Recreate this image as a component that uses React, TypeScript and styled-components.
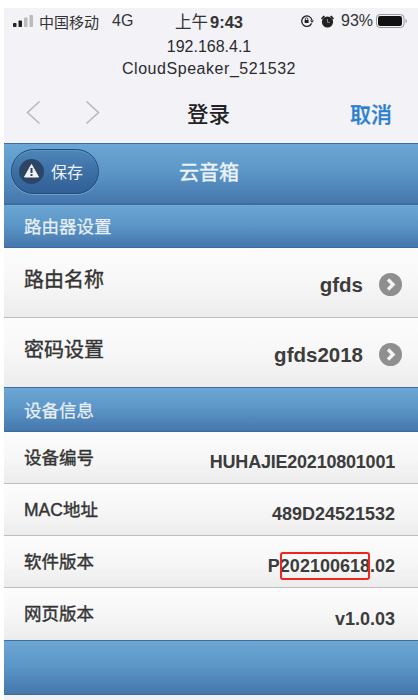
import React from 'react';
import styled, { createGlobalStyle } from 'styled-components';

const FONT = `"Liberation Sans", Arial, "Noto Sans CJK SC", sans-serif`;

const GlobalStyle = createGlobalStyle`
  html, body {
    margin: 0;
    padding: 0;
    background: #fff;
    font-family: ${FONT};
  }
  * { box-sizing: border-box; }
`;

const Page = styled.div`
  width: 418px;
  height: 700px;
  padding: 8px 0 0 4px;
  overflow: hidden;
  background: #fff;
`;

const Browser = styled.div`
  height: 135px;
  background: #f2f2f7;
  color: #2b2b2e;
`;

const StatusBar = styled.div`
  display: flex;
  align-items: center;
  height: 26px;
  padding: 0 0 0 8px;
  color: #333;
`;

const Carrier = styled.span`
  margin-left: 4px;
  width: 73px;
  font-size: 15px;
`;

const Net = styled.span`
  width: 63px;
  font-size: 16px;
`;

const Clock = styled.span`
  width: 125px;
  font-size: 16.5px;
  strong {
    font-weight: 700;
    margin-left: 2px;
  }
`;

const Battery = styled.span`
  display: flex;
  align-items: center;
  gap: 6px;
  font-size: 16px;
`;

const Address = styled.div`
  text-align: center;
  font-size: 16px;
  line-height: 22px;
  padding-right: 4px;
  margin-top: 2px;
`;

const AddressName = styled.span`
  letter-spacing: 0.55px;
`;

const NavBar = styled.div`
  display: flex;
  align-items: center;
  height: 43px;
  margin-top: 11px;
  padding: 0 26px 0 22px;
`;

const NavArrows = styled.div`
  display: flex;
  gap: 44px;
  width: 142px;
`;

const NavTitle = styled.div`
  flex: 1;
  font-size: 21.5px;
  font-weight: 500;
  color: #222;
  padding-left: 19px;
`;

const NavCancel = styled.div`
  font-size: 21px;
  font-weight: 500;
  color: #2a80d0;
  -webkit-text-stroke: 0.3px #2a80d0;
`;

const Bar = styled.div<{ $height: number }>`
  display: flex;
  align-items: center;
  height: ${({ $height }) => $height}px;
  background: linear-gradient(#6ba6d4, #5c97c8 45%, #4577ad);
  border-top: 1px solid #3f6d9c;
  border-bottom: 1px solid #3f6a9e;
  color: #f1f5f8;
`;

const SaveButton = styled.div`
  display: flex;
  align-items: center;
  gap: 7px;
  width: 88px;
  height: 45px;
  margin: -5px 0 0 7px;
  padding-left: 7px;
  border: 1px solid #1f4c7c;
  border-radius: 23px;
  background: linear-gradient(#4e86ba, #3b6ea3 55%, #315f96);
  font-size: 16px;
  color: #eef2f6;
  box-shadow: 0 1px 0 rgba(255, 255, 255, 0.25), inset 0 1px 1px rgba(255, 255, 255, 0.12);
`;

const HeaderTitle = styled.div`
  margin: -4px 0 0 80px;
  font-size: 20px;
  font-weight: 400;
  color: #eef3f7;
  -webkit-text-stroke: 0.4px #eef3f7;
`;

const SectionTitle = styled.div`
  padding-left: 20px;
  margin-top: -1px;
  font-size: 17.5px;
  font-weight: 400;
  color: #e9eff4;
  -webkit-text-stroke: 0.25px #e9eff4;
`;

const Row = styled.div<{ $height: number; $last?: boolean }>`
  display: flex;
  justify-content: space-between;
  align-items: center;
  height: ${({ $height }) => $height}px;
  padding: 0 ${({ $height }) => ($height > 60 ? 16 : 23)}px 0 20px;
  background: linear-gradient(#fcfcfc, #f7f7f7 50%, #ececec);
  border-bottom: 1px solid #bdbdbd;
  border-bottom-width: ${({ $last }) => ($last ? 0 : 1)}px;
`;

const RowLabel = styled.div<{ $large?: boolean }>`
  font-size: ${({ $large }) => ($large ? 20 : 17.5)}px;
  font-weight: 400;
  color: #333;
  -webkit-text-stroke: 0.4px #333;
  margin-top: ${({ $large }) => ($large ? -8 : -3)}px;
`;

const RowValue = styled.div<{ $large?: boolean; $tight?: boolean }>`
  display: flex;
  align-items: center;
  gap: 16px;
  font-size: ${({ $large }) => ($large ? 20.5 : 18)}px;
  font-weight: 700;
  color: #3c3c3c;
  letter-spacing: ${({ $tight }) => ($tight ? -0.22 : 0)}px;
  margin-top: ${({ $large }) => ($large ? 4 : 10)}px;
`;

const Marked = styled.span`
  position: relative;
  &::after {
    content: '';
    position: absolute;
    inset: -4px 0;
    border: 2px solid #f0241c;
    border-radius: 3px;
  }
`;

const PageEnd = styled.div`
  height: 6px;
  background: #f3f3f3;
`;

const SignalIcon = () => (
  <svg width="23" height="14" viewBox="0 0 23 14">
    <rect x="1" y="9" width="3.500" height="4" rx="0.8" fill="#222" />
    <rect x="6.500" y="6.500" width="3.500" height="6.500" rx="0.8" fill="#222" />
    <rect x="12" y="3.500" width="3.500" height="9.500" rx="0.8" fill="#bbb" />
    <rect x="17.500" y="1" width="3.500" height="12" rx="0.8" fill="#bbb" />
  </svg>
);

const RotationIcon = () => (
  <svg width="14" height="14" viewBox="0 0 14 14" fill="none">
    <path d="M11.600 9.400A5.200 5.200 0 1 1 12 6.200" stroke="#222" strokeWidth="1.300" />
    <path d="M10 6.400h4l-2 2.400z" fill="#222" />
    <rect x="4.600" y="6" width="4" height="3" rx="0.5" fill="#222" />
    <path d="M5.400 6V5a1.200 1.200 0 0 1 2.400 0v1" stroke="#222" strokeWidth="0.8" />
  </svg>
);

const AlarmIcon = () => (
  <svg width="15" height="15" viewBox="0 0 15 15">
    <circle cx="7.500" cy="8" r="5.600" fill="#222" />
    <path d="M1 4.200 3.600 1.600 5 2.600 2 5.400zM14 4.200 11.400 1.600 10 2.600 13 5.400z" fill="#222" />
    <path d="M7.500 5v3.400h2.400" stroke="#888" strokeWidth="1" fill="none" />
  </svg>
);

const BatteryIcon = () => (
  <svg width="32" height="14" viewBox="0 0 32 14" style={{ marginLeft: -3 }}>
    <rect x="0.500" y="0.500" width="27.500" height="13" rx="3.500" fill="none" stroke="#9a9a9a" />
    <rect x="2" y="2" width="24" height="10" rx="2.200" fill="#111" />
    <path d="M29.500 5v4c.8-.3 1.300-1 1.300-2s-.5-1.700-1.300-2z" fill="#9a9a9a" />
  </svg>
);

const Chevron = ({ flip }: { flip?: boolean }) => (
  <svg width="15" height="25" viewBox="0 0 15 25" fill="none">
    <path
      d={flip ? 'M1.500 1.500 13.500 12.500 1.500 23.500' : 'M13.500 1.500 1.500 12.500 13.500 23.500'}
      stroke="#b9b9bd"
      strokeWidth="1.600"
    />
  </svg>
);

const WarningBadge = () => (
  <svg width="25" height="25" viewBox="0 0 25 25">
    <circle cx="12.500" cy="12.500" r="12.500" fill="#2c4564" />
    <path d="M12.500 5.500 19.500 18h-14z" fill="#f2f2f2" stroke="#f2f2f2" strokeWidth="1" strokeLinejoin="round" />
    <rect x="11.500" y="9" width="2" height="5" fill="#2c4564" />
    <rect x="11.500" y="15" width="2" height="2" fill="#2c4564" />
  </svg>
);

const Disclosure = () => (
  <svg width="23" height="23" viewBox="0 0 23 23" fill="none">
    <circle cx="11.500" cy="11.500" r="11.500" fill="#8f8f8f" />
    <path d="M9 6.500 14 11.500 9 16.500" stroke="#f4f4f4" strokeWidth="3.400" />
  </svg>
);

export default function App() {
  return (
    <>
      <GlobalStyle />
      <Page>
        <Browser>
          <StatusBar>
            <SignalIcon />
            <Carrier>中国移动</Carrier>
            <Net>4G</Net>
            <Clock>
              上午<strong>9:43</strong>
            </Clock>
            <Battery>
              <RotationIcon />
              <AlarmIcon />
              93%
              <BatteryIcon />
            </Battery>
          </StatusBar>
          <Address>
            192.168.4.1
            <br />
            <AddressName>CloudSpeaker_521532</AddressName>
          </Address>
          <NavBar>
            <NavArrows>
              <Chevron />
              <Chevron flip />
            </NavArrows>
            <NavTitle>登录</NavTitle>
            <NavCancel>取消</NavCancel>
          </NavBar>
        </Browser>

        <Bar $height={61}>
          <SaveButton>
            <WarningBadge />
            保存
          </SaveButton>
          <HeaderTitle>云音箱</HeaderTitle>
        </Bar>
        <Bar $height={44}>
          <SectionTitle>路由器设置</SectionTitle>
        </Bar>
        <Row $height={70}>
          <RowLabel $large>路由名称</RowLabel>
          <RowValue $large>
            gfds
            <Disclosure />
          </RowValue>
        </Row>
        <Row $height={69} $last>
          <RowLabel $large>密码设置</RowLabel>
          <RowValue $large>
            gfds2018
            <Disclosure />
          </RowValue>
        </Row>
        <Bar $height={45}>
          <SectionTitle>设备信息</SectionTitle>
        </Bar>
        <Row $height={52}>
          <RowLabel>设备编号</RowLabel>
          <RowValue $tight>HUHAJIE20210801001</RowValue>
        </Row>
        <Row $height={52}>
          <RowLabel>MAC地址</RowLabel>
          <RowValue>489D24521532</RowValue>
        </Row>
        <Row $height={52}>
          <RowLabel>软件版本</RowLabel>
          <RowValue>
            <span>
              P<Marked>202100618</Marked>.02
            </span>
          </RowValue>
        </Row>
        <Row $height={52} $last>
          <RowLabel>网页版本</RowLabel>
          <RowValue>v1.0.03</RowValue>
        </Row>
        <Bar $height={55} />
        <PageEnd />
      </Page>
    </>
  );
}
